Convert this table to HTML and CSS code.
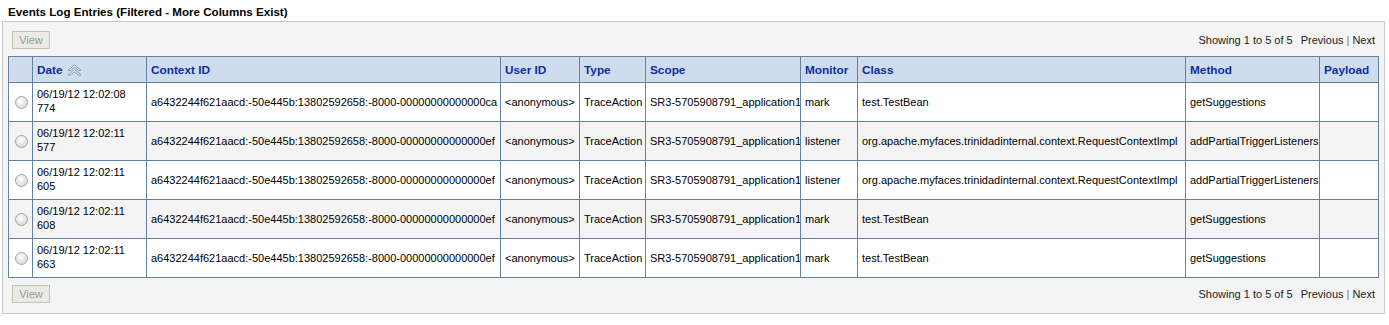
FILE: index.html
```html
<!DOCTYPE html>
<html lang="en">
<head>
    <meta charset="UTF-8" />
    <title>Events Log Entries</title>
    <link rel="stylesheet" href="styles.css">
</head>
<body>
    <h2 class="panel-title">Events Log Entries (Filtered - More Columns Exist)</h2>
    <div class="panel">
        <div class="toolbar">
            <button class="view-button" disabled>View</button>
            <div class="pager">Showing 1 to 5 of 5 <span class="pager-link">Previous</span><span class="sep">|</span><span class="pager-link">Next</span></div>
        </div>
        <table class="log-table">
            <colgroup>
                <col style="width:24px">
                <col style="width:114px">
                <col style="width:354px">
                <col style="width:79px">
                <col style="width:66px">
                <col style="width:155px">
                <col style="width:57px">
                <col style="width:328px">
                <col style="width:134px">
                <col style="width:59px">
            </colgroup>
            <thead>
                <tr>
                    <th></th>
                    <th>Date <svg class="sort-icon" width="15" height="12" viewBox="0 0 15 12"><path d="M1 6.5 L7.5 0.8 L14 6.5 L11.5 6.5 L7.5 3.2 L3.5 6.5 Z" fill="#f4f7fb" stroke="#7f93b3" stroke-width="1" stroke-linejoin="round"/><path d="M1 11 L7.5 5.3 L14 11 L11.5 11 L7.5 7.7 L3.5 11 Z" fill="#f4f7fb" stroke="#7f93b3" stroke-width="1" stroke-linejoin="round"/></svg></th>
                    <th>Context ID</th>
                    <th>User ID</th>
                    <th>Type</th>
                    <th>Scope</th>
                    <th>Monitor</th>
                    <th>Class</th>
                    <th>Method</th>
                    <th>Payload</th>
                </tr>
            </thead>
            <tbody>
                <tr>
                    <td><span class="radio"></span></td>
                    <td class="date">06/19/12 12:02:08 774</td>
                    <td>a6432244f621aacd:-50e445b:13802592658:-8000-00000000000000ca</td>
                    <td>&lt;anonymous&gt;</td>
                    <td>TraceAction</td>
                    <td>SR3-5705908791_application1</td>
                    <td>mark</td>
                    <td>test.TestBean</td>
                    <td>getSuggestions</td>
                    <td></td>
                </tr>
                <tr class="alt">
                    <td><span class="radio"></span></td>
                    <td class="date">06/19/12 12:02:11 577</td>
                    <td>a6432244f621aacd:-50e445b:13802592658:-8000-00000000000000ef</td>
                    <td>&lt;anonymous&gt;</td>
                    <td>TraceAction</td>
                    <td>SR3-5705908791_application1</td>
                    <td>listener</td>
                    <td>org.apache.myfaces.trinidadinternal.context.RequestContextImpl</td>
                    <td>addPartialTriggerListeners</td>
                    <td></td>
                </tr>
                <tr>
                    <td><span class="radio"></span></td>
                    <td class="date">06/19/12 12:02:11 605</td>
                    <td>a6432244f621aacd:-50e445b:13802592658:-8000-00000000000000ef</td>
                    <td>&lt;anonymous&gt;</td>
                    <td>TraceAction</td>
                    <td>SR3-5705908791_application1</td>
                    <td>listener</td>
                    <td>org.apache.myfaces.trinidadinternal.context.RequestContextImpl</td>
                    <td>addPartialTriggerListeners</td>
                    <td></td>
                </tr>
                <tr class="alt">
                    <td><span class="radio"></span></td>
                    <td class="date">06/19/12 12:02:11 608</td>
                    <td>a6432244f621aacd:-50e445b:13802592658:-8000-00000000000000ef</td>
                    <td>&lt;anonymous&gt;</td>
                    <td>TraceAction</td>
                    <td>SR3-5705908791_application1</td>
                    <td>mark</td>
                    <td>test.TestBean</td>
                    <td>getSuggestions</td>
                    <td></td>
                </tr>
                <tr>
                    <td><span class="radio"></span></td>
                    <td class="date">06/19/12 12:02:11 663</td>
                    <td>a6432244f621aacd:-50e445b:13802592658:-8000-00000000000000ef</td>
                    <td>&lt;anonymous&gt;</td>
                    <td>TraceAction</td>
                    <td>SR3-5705908791_application1</td>
                    <td>mark</td>
                    <td>test.TestBean</td>
                    <td>getSuggestions</td>
                    <td></td>
                </tr>
            </tbody>
        </table>
        <div class="toolbar toolbar-bottom">
            <button class="view-button" disabled>View</button>
            <div class="pager">Showing 1 to 5 of 5 <span class="pager-link">Previous</span><span class="sep">|</span><span class="pager-link">Next</span></div>
        </div>
    </div>
</body>
</html>
```

FILE: styles.css
```css
/* Page */
body {
    font-family: 'Liberation Sans', Arial, sans-serif;
    font-size: 11px;
    color: #000;
    background: #ffffff;
    margin: 0;
}

.panel-title {
    font-size: 11.6px;
    font-weight: bold;
    color: #000;
    margin: 0;
    padding: 5px 0 0 8px;
    height: 16px;
    line-height: 13px;
}

/* Panel box */
.panel {
    margin: 0 4px 0 2px;
    padding: 9px 6px 10px 5px;
    background: #f4f4f4;
    border: 1px solid #c9c9c9;
}

.toolbar {
    display: flex;
    justify-content: space-between;
    align-items: center;
    height: 18px;
    padding-left: 4px;
    margin-bottom: 7px;
}

.toolbar-bottom {
    margin-top: 7px;
    margin-bottom: 0;
}

.view-button {
    font-family: 'Liberation Sans', Arial, sans-serif;
    font-size: 11px;
    color: #9a9a9a;
    background: #ebebe4;
    border: 1px solid #c3c3b8;
    height: 18px;
    width: 38px;
    padding: 0;
}

.pager {
    color: #222;
    padding-right: 3px;
}

.pager-link {
    margin-left: 5px;
}

.sep {
    color: #777;
    margin-left: 3px;
}

.sep + .pager-link {
    margin-left: 3px;
}

/* Table */
.log-table {
    width: 100%;
    table-layout: fixed;
    border-collapse: collapse;
    background: #ffffff;
}

.log-table th,
.log-table td {
    border: 1px solid #62809f;
    padding: 0 4px;
    text-align: left;
    white-space: nowrap;
    overflow: hidden;
}

.log-table th {
    background: #cfdcee;
    color: #0b2f9c;
    font-size: 11.8px;
    font-weight: bold;
    height: 25px;
}

.log-table td {
    height: 36px;
}

.log-table td.date {
    white-space: normal;
    line-height: 14px;
    padding-bottom: 2px;
}

.log-table tr.alt td {
    background: #f4f4f4;
}

.sort-icon {
    vertical-align: -2px;
    margin-left: 1px;
}

.radio {
    display: block;
    width: 11px;
    height: 11px;
    margin-left: 2px;
    border: 1px solid #a4a4a4;
    border-radius: 50%;
    background: radial-gradient(circle at 40% 35%, #ffffff 0%, #e9e9e9 45%, #cfcfcf 100%);
}
```
